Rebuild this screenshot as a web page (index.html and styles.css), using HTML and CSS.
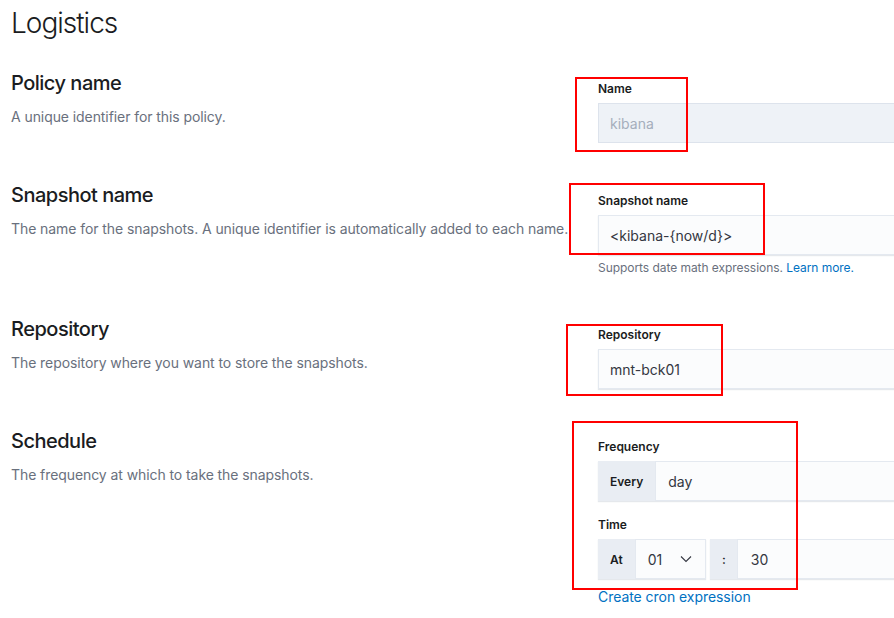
FILE: index.html
```html
<!DOCTYPE html>
<html lang="en">
<head>
<meta charset="utf-8">
<title>Logistics</title>
<link rel="stylesheet" href="styles.css">
</head>
<body>
<main class="page">
  <h1 class="page-title">Logistics</h1>

  <section class="group">
    <div class="group-desc">
      <h3 class="group-title">Policy name</h3>
      <p class="group-text">A unique identifier for this policy.</p>
    </div>
    <div class="group-fields">
      <div class="form-row">
        <label class="form-label">Name</label>
        <div class="field field-disabled">kibana</div>
      </div>
    </div>
  </section>

  <section class="group">
    <div class="group-desc">
      <h3 class="group-title">Snapshot name</h3>
      <p class="group-text">The name for the snapshots. A unique identifier is automatically added to each name.</p>
    </div>
    <div class="group-fields">
      <div class="form-row">
        <label class="form-label">Snapshot name</label>
        <div class="field">&lt;kibana-{now/d}&gt;</div>
        <div class="help-text">Supports date math expressions. <a class="link">Learn more.</a></div>
      </div>
    </div>
  </section>

  <section class="group">
    <div class="group-desc">
      <h3 class="group-title">Repository</h3>
      <p class="group-text">The repository where you want to store the snapshots.</p>
    </div>
    <div class="group-fields">
      <div class="form-row">
        <label class="form-label">Repository</label>
        <div class="field">mnt-bck01</div>
      </div>
    </div>
  </section>

  <section class="group">
    <div class="group-desc">
      <h3 class="group-title">Schedule</h3>
      <p class="group-text">The frequency at which to take the snapshots.</p>
    </div>
    <div class="group-fields">
      <div class="form-row">
        <label class="form-label">Frequency</label>
        <div class="field field-group">
          <span class="prepend">Every</span>
          <span class="field-value">day</span>
        </div>
      </div>
      <div class="form-row form-row-next">
        <label class="form-label">Time</label>
        <div class="time-row">
          <div class="field field-group field-hour">
            <span class="prepend">At</span>
            <span class="field-value select-value">01
              <svg class="chevron" width="12" height="8" viewBox="0 0 12 8"><path d="M1 1.5 L6 6.5 L11 1.5" fill="none" stroke="#343741" stroke-width="1.1"/></svg>
            </span>
          </div>
          <div class="field field-group field-minute">
            <span class="prepend prepend-colon">:</span>
            <span class="field-value">30</span>
          </div>
        </div>
      </div>
      <a class="link cron-link">Create cron expression</a>
    </div>
  </section>
</main>

<div class="mark mark-1"></div>
<div class="mark mark-2"></div>
<div class="mark mark-3"></div>
<div class="mark mark-4"></div>
</body>
</html>
```

FILE: styles.css
```css
html, body {
  margin: 0;
  padding: 0;
  background: #ffffff;
}

body {
  position: relative;
  width: 894px;
  height: 618px;
  overflow: hidden;
  font-family: Inter, "Noto Sans", sans-serif;
  color: #1a1c21;
}

.page {
  padding: 3px 0 0 11px;
}

.page-title {
  margin: 0 0 28px 0;
  font-size: 28px;
  line-height: 40px;
  font-weight: 300;
  color: #1a1c21;
  letter-spacing: -1px;
}

.group {
  display: flex;
  margin-bottom: 40px;
}

.group-desc {
  width: 587px;
  flex: none;
}

.group-title {
  margin: 0;
  font-size: 20px;
  line-height: 24px;
  font-weight: 500;
  color: #1a1c21;
  letter-spacing: -0.5px;
}

.group-text {
  margin: 11px 0 0 0;
  font-size: 14px;
  line-height: 21px;
  color: #69707d;
  letter-spacing: -0.08px;
}

.group-fields {
  width: 400px;
  flex: none;
  padding-top: 9px;
}

.form-row {
  display: flex;
  flex-direction: column;
}

.form-row-next {
  margin-top: 15px;
}

.form-label {
  font-size: 12px;
  line-height: 18px;
  font-weight: 600;
  color: #1a1c21;
  margin-bottom: 5px;
}

.field {
  box-sizing: border-box;
  height: 40px;
  display: flex;
  align-items: center;
  padding: 0 12px;
  background: #fbfcfd;
  box-shadow: inset 0 0 0 1px #e4e9f0, 0 1px 1px rgba(152, 162, 179, 0.25);
  font-size: 14px;
  color: #343741;
}

.field-disabled {
  background: #eef2f7;
  color: #a5aebc;
  box-shadow: inset 0 0 0 1px #dde3ec;
}

.help-text {
  margin-top: 4px;
  font-size: 12px;
  line-height: 18px;
  color: #69707d;
  letter-spacing: -0.05px;
}

.link {
  color: #0071c2;
  text-decoration: none;
}

.field-group {
  padding: 0;
  overflow: hidden;
}

.prepend {
  height: 100%;
  display: flex;
  align-items: center;
  padding: 0 12px;
  background: #e9edf3;
  font-size: 12px;
  font-weight: 600;
  color: #1a1c21;
  border-right: 1px solid #e4e9f0;
}

.field-value {
  padding: 0 12px;
  display: flex;
  align-items: center;
}

.time-row {
  display: flex;
  gap: 4px;
}

.field-hour {
  width: 108px;
  flex: none;
}

.select-value {
  flex: 1;
  justify-content: space-between;
  padding-right: 14px;
}

.chevron {
  display: block;
}

.field-minute {
  flex: 1;
}

.prepend-colon {
  padding: 0 11px 0 12px;
}

.field-minute .field-value {
  padding-left: 13px;
}

.cron-link {
  display: block;
  margin-top: 7px;
  font-size: 14px;
  line-height: 21px;
  letter-spacing: -0.05px;
}

.mark {
  position: absolute;
  box-sizing: border-box;
  border: 2px solid #ff0000;
}

.mark-1 { left: 575px; top: 77px; width: 113px; height: 75px; }
.mark-2 { left: 569px; top: 183px; width: 196px; height: 72px; }
.mark-3 { left: 566px; top: 324px; width: 157px; height: 72px; }
.mark-4 { left: 572px; top: 421px; width: 226px; height: 169px; }
```
